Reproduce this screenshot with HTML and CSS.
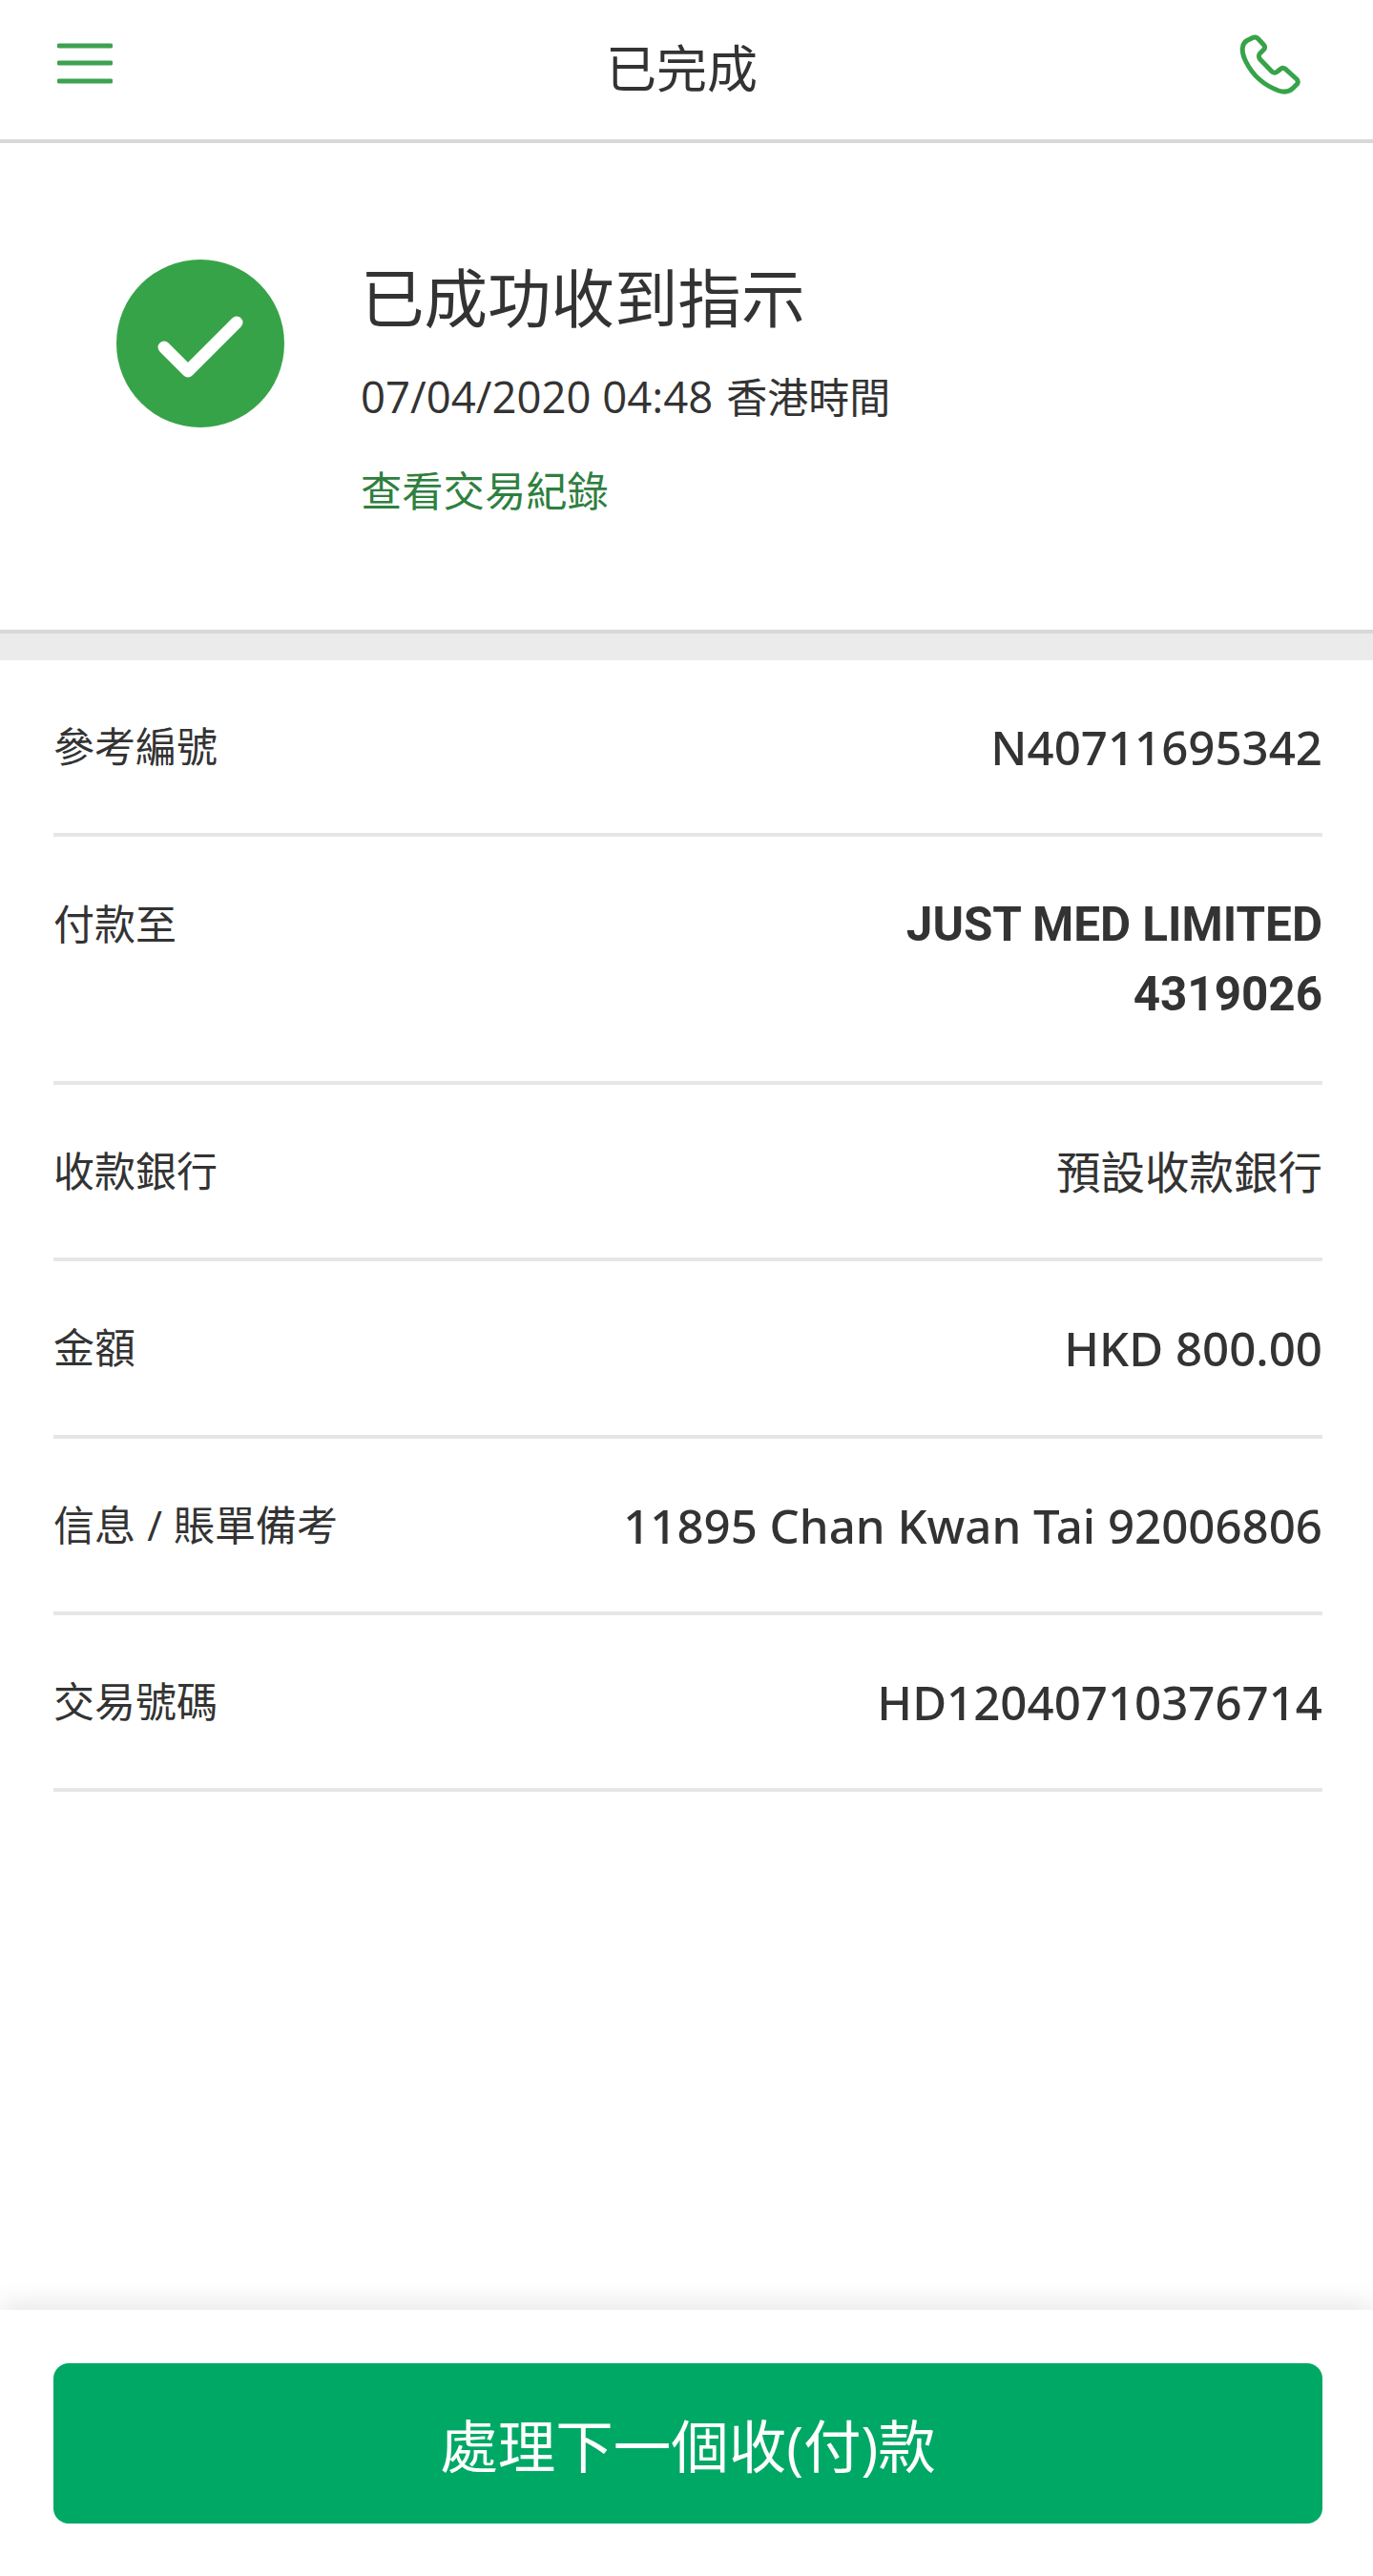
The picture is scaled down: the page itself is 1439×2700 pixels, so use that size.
FILE: index.html
```html
<!DOCTYPE html>
<html lang="zh-Hant">
<head>
    <meta charset="UTF-8">
    <meta name="viewport" content="width=device-width, initial-scale=1.0">
    <title>已完成</title>
    <link rel="stylesheet" href="styles.css">
</head>
<body>
    <header class="topbar">
        <svg class="menuIcon" viewBox="0 0 58 70" width="58" height="70" aria-hidden="true">
            <path d="M2 12H56M2 30H56M2 49H56" />
        </svg>
        <div class="topbarTitle">已完成</div>
        <svg class="phoneIcon" viewBox="15 18 70 70" width="70" height="70" aria-hidden="true">
            <path d="M33 21.500C35 20.500 37 21 38.500 22.500L44.500 29C46 30.500 46 32.500 44.500 34L40.500 38C39 39.500 39 42 40.500 44L53 57C55 58.500 57 58.500 58.500 57.200L62.500 54C64 53 65.500 53 67 54.200L79 65C80.500 66.500 80.500 68.500 79.500 70L75 74.500C71 78.500 66 79 60 77C48 72.500 34 63 26 47C23 41 21.500 35.500 22.500 31C23 28 24.500 26 27 24.500Z" />
        </svg>
    </header>

    <section class="result">
        <svg class="checkIcon" viewBox="0 0 176 176" width="176" height="176" aria-hidden="true">
            <circle cx="88" cy="88" r="88" />
            <path d="M50 92L75 117L126 66" />
        </svg>
        <div class="resultText">
            <div class="resultTitle">已成功收到指示</div>
            <div class="resultDate">07/04/2020 04:48 <span class="timeZone">香港時間</span></div>
            <div class="resultLink">查看交易紀錄</div>
        </div>
    </section>

    <main class="details">
        <div class="row">
            <div class="label">參考編號</div>
            <div class="value">N40711695342</div>
        </div>
        <div class="row">
            <div class="label">付款至</div>
            <div class="value payee">JUST MED LIMITED<br>4319026</div>
        </div>
        <div class="row">
            <div class="label">收款銀行</div>
            <div class="value bankName">預設收款銀行</div>
        </div>
        <div class="row">
            <div class="label">金額</div>
            <div class="value">HKD 800.00</div>
        </div>
        <div class="row">
            <div class="label">信息 / 賬單備考</div>
            <div class="value">11895 Chan Kwan Tai 92006806</div>
        </div>
        <div class="row">
            <div class="label">交易號碼</div>
            <div class="value">HD12040710376714</div>
        </div>
    </main>

    <footer class="actions">
        <button class="nextButton">處理下一個收(付)款</button>
    </footer>
</body>
</html>
```

FILE: styles.css
```css
* {
    box-sizing: border-box;
}
body {
    margin: 0;
    height: 100vh;
    display: flex;
    flex-direction: column;
    background: #fff;
    color: #333;
    font-family: "Open Sans", "Noto Sans CJK TC", sans-serif;
}
.topbar {
    display: flex;
    align-items: center;
    height: 150px;
    padding: 0 74px 4px 60px;
    border-bottom: 4px solid #d8d8d8;
}
.menuIcon path {
    fill: none;
    stroke: #3da251;
    stroke-width: 5;
    stroke-linecap: round;
}
.phoneIcon path {
    fill: none;
    stroke: #37a349;
    stroke-width: 5;
    stroke-linejoin: round;
}
.topbarTitle {
    flex: 1;
    padding-left: 16px;
    padding-top: 2px;
    text-align: center;
    font-size: 53px;
    line-height: 70px;
}
.result {
    display: flex;
    gap: 80px;
    height: 514px;
    padding: 122px 0 0 122px;
    border-bottom: 4px solid #d8d8d8;
}
.checkIcon {
    flex-shrink: 0;
}
.checkIcon circle {
    fill: #37a349;
}
.checkIcon path {
    fill: none;
    stroke: #fff;
    stroke-width: 13;
    stroke-linecap: round;
    stroke-linejoin: round;
}
.resultTitle {
    font-size: 66.500px;
    line-height: 80px;
}
.resultDate {
    margin-top: 35px;
    font-size: 45.500px;
    line-height: 56px;
}
.timeZone {
    margin-left: 2px;
    font-size: 43px;
}
.resultLink {
    margin-top: 42px;
    font-size: 43.300px;
    line-height: 56px;
    color: #2f7f3f;
}
.details {
    flex: 1;
    margin-top: 28px;
    padding: 0 53px 0 56px;
    position: relative;
}
.details::before {
    content: "";
    position: absolute;
    left: 0;
    right: 0;
    top: -28px;
    height: 28px;
    background: #ebebeb;
}
.row {
    display: flex;
    justify-content: space-between;
    padding: 55.200px 0 54.200px;
    border-bottom: 4px solid #e6e6e6;
}
.label {
    font-size: 43px;
    line-height: 72px;
    word-spacing: 1px;
}
.value {
    font-family: "Noto Sans", "Noto Sans CJK TC", sans-serif;
    font-size: 49.200px;
    line-height: 72px;
    font-weight: 500;
    text-align: right;
}
.bankName {
    font-size: 46.500px;
    font-weight: 400;
}
.payee {
    font-family: Roboto, sans-serif;
    font-size: 49.400px;
    font-weight: 700;
    line-height: 73px;
}
.actions {
    height: 279px;
    padding: 56px 53px 0 56px;
    background: #fff;
    box-shadow: 0 -6px 26px rgba(0, 0, 0, 0.1);
}
.nextButton {
    display: block;
    width: 100%;
    height: 168px;
    border: none;
    border-radius: 16px;
    background: #00a865;
    color: #fff;
    font-family: inherit;
    font-size: 60.500px;
}
```
